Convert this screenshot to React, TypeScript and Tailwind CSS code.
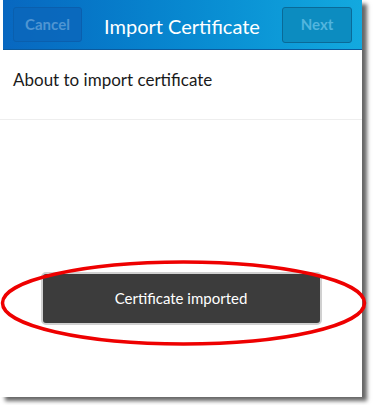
export default function App() {
  return (
    <div className="relative w-[374px] h-[405px] bg-white overflow-hidden" style={{ fontFamily: "Lato, 'Open Sans', sans-serif" }}>
      {/* device frame with drop shadow */}
      <div className="relative w-[362px] h-[397px] bg-white shadow-[5px_4px_4px_rgba(0,0,0,0.6)] flex flex-col">
        <div className="h-[50px] ml-[3px] flex items-center justify-between px-[10px] bg-gradient-to-r from-[#0867c0] to-[#13a9df] border-b border-[#0b5a9e]">
          <button className="w-[69px] h-[35px] rounded-[3px] bg-[#0b66ba]/80 border border-[#0a5fae] text-[#4f95d2] text-[15px] font-bold">
            Cancel
          </button>
          <span className="text-white text-[20px] leading-none pt-[3px]">Import Certificate</span>
          <button className="w-[70px] h-[36px] rounded-[3px] bg-[#0c8cc0] border border-[#0a6a98] text-[#52b5de] text-[15px] font-bold">
            Next
          </button>
        </div>
        <div className="h-[70px] border-b border-[#eeeeee] px-[13px] pt-[17px] text-[17px] text-[#1a1a1a]">
          About to import certificate
        </div>
        <div className="flex-1 flex flex-col items-center pt-[152px]">
          <div className="w-[281px] h-[53px] rounded-[5px] bg-[#3c3c3c] border-2 border-[#d0d0d0] flex items-center justify-center text-white text-[15px]">
            Certificate imported
          </div>
        </div>
      </div>
      {/* red annotation ellipse */}
      <svg className="absolute left-0 top-0" width="374" height="405">
        <ellipse cx="183.5" cy="303" rx="181" ry="41" fill="none" stroke="#ee0000" strokeWidth="3.5" />
      </svg>
    </div>
  );
}
